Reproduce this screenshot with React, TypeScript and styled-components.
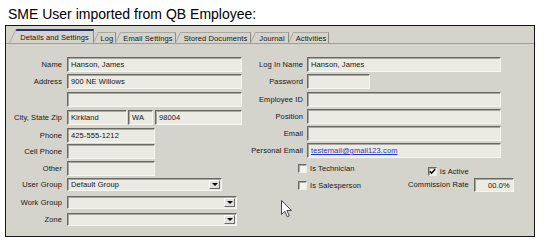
import React from 'react';
import styled, { createGlobalStyle } from 'styled-components';

const Global = createGlobalStyle`
  html, body { margin: 0; padding: 0; background: #fff; }
  body { width: 550px; height: 249px; overflow: hidden; }
`;

const Page = styled.div`
  padding: 6px 0 0 5px;
`;

const Title = styled.div`
  font-family: "Liberation Sans", Arial, sans-serif;
  font-size: 14px;
  line-height: 16px;
  color: #000;
  margin: 0 0 3px 3px;
`;

const Panel = styled.div`
  position: relative;
  width: 530px;
  height: 212px;
  box-sizing: border-box;
  border: 1px solid #151515;
  background: #d5d4cc;
  font-family: "Liberation Sans", Arial, sans-serif;
  font-size: 7.5px;
  letter-spacing: 0.1px;
  color: #151515;
`;

const TabStrip = styled.div`
  display: flex;
  align-items: flex-end;
  height: 18px;
  box-sizing: border-box;
  padding-left: 10px;
  border-bottom: 1px solid #9d9c95;
`;

const Tab = styled.div<{ $w: number; $active?: boolean }>`
  position: relative;
  flex: none;
  width: ${(p) => p.$w}px;
  height: ${(p) => (p.$active ? 14 : 11)}px;
  margin-left: ${(p) => (p.$active ? 0 : 5)}px;
  box-sizing: border-box;
  border-top: ${(p) => (p.$active ? '2px solid #27306a' : '1px solid #a9a8a0')};
  border-right: 1px solid #8d8c85;
  display: flex;
  align-items: center;
  justify-content: center;
  white-space: nowrap;
  &::before {
    content: '';
    position: absolute;
    left: ${(p) => (p.$active ? -7 : -6)}px;
    top: ${(p) => (p.$active ? -2 : -1)}px;
    bottom: 0;
    width: 6px;
    border-left: 1px solid #a9a8a0;
    transform-origin: bottom left;
    transform: skewX(-25deg);
  }
`;

const Body = styled.div`
  display: flex;
  gap: 5px;
  padding-top: 13px;
`;

const Col = styled.div<{ $w: number }>`
  display: flex;
  flex-direction: column;
  width: ${(p) => p.$w}px;
  flex: none;
`;

const Row = styled.div<{ $h: number }>`
  display: flex;
  align-items: flex-start;
  height: ${(p) => p.$h}px;
`;

const Label = styled.div<{ $gap: number; $lh?: number }>`
  flex: none;
  width: 56px;
  margin-right: ${(p) => p.$gap}px;
  text-align: right;
  line-height: ${(p) => p.$lh ?? 15}px;
  white-space: nowrap;
`;

const Field = styled.div<{ $w: number; $h?: number; $ml?: number; $right?: boolean }>`
  flex: none;
  box-sizing: border-box;
  width: ${(p) => p.$w}px;
  height: ${(p) => p.$h ?? 15}px;
  margin-left: ${(p) => p.$ml ?? 0}px;
  background: #ecebe3;
  border-top: 1px solid #686863;
  border-left: 1px solid #686863;
  border-right: 1px solid #f7f7f2;
  border-bottom: 1px solid #f7f7f2;
  box-shadow: inset 1px 1px 0 #a9a8a0;
  padding: 0 3px 0 3px;
  line-height: ${(p) => (p.$h ?? 15) - 1}px;
  text-align: ${(p) => (p.$right ? 'right' : 'left')};
  white-space: nowrap;
  overflow: hidden;
  color: #111;
`;

const Select = styled.div<{ $w: number }>`
  flex: none;
  box-sizing: border-box;
  width: ${(p) => p.$w}px;
  height: 13px;
  background: #ecebe3;
  border-top: 1px solid #686863;
  border-left: 1px solid #686863;
  border-right: 1px solid #f7f7f2;
  border-bottom: 1px solid #f7f7f2;
  box-shadow: inset 1px 1px 0 #a9a8a0;
  padding: 0 1px 0 3px;
  display: flex;
  align-items: center;
  justify-content: space-between;
  white-space: nowrap;
  color: #111;
`;

const DropButton = styled.span`
  flex: none;
  width: 11px;
  height: 9px;
  box-sizing: border-box;
  border: 1px solid;
  border-color: #ffffff #6a6a66 #6a6a66 #ffffff;
  background: #e2e1da;
  display: flex;
  align-items: center;
  justify-content: center;
  &::after {
    content: '';
    border-left: 3px solid transparent;
    border-right: 3px solid transparent;
    border-top: 3px solid #000;
  }
`;

const Link = styled.span`
  color: #2438c8;
  text-decoration: underline;
`;

const CheckArea = styled.div`
  display: flex;
  padding-left: 51px;
`;

const CheckCol = styled.div`
  display: flex;
  flex-direction: column;
  width: 110px;
  flex: none;
`;

const CheckRow = styled.label<{ $h: number; $end?: boolean }>`
  display: flex;
  align-items: center;
  justify-content: ${(p) => (p.$end ? 'flex-end' : 'flex-start')};
  gap: 3px;
  height: ${(p) => p.$h}px;
  white-space: nowrap;
`;

const Box = styled.span`
  flex: none;
  width: 9px;
  height: 9px;
  box-sizing: border-box;
  border: 1px solid;
  border-color: #6a6a65 #ecece6 #ecece6 #6a6a65;
  background: #f4f3ee;
  box-shadow: inset 1px 1px 0 #aaa9a1;
  display: flex;
  align-items: center;
  justify-content: center;
`;

const RateGrid = styled.div`
  display: grid;
  grid-template-columns: 1fr 40px;
  grid-auto-rows: 14px;
  column-gap: 5px;
  width: 104px;
  margin-top: 4px;
`;

const RateLabel = styled.div`
  text-align: right;
  line-height: 14px;
  white-space: nowrap;
`;

const Cursor = styled.svg`
  position: absolute;
  left: 275px;
  top: 174px;
`;

const Check = () => (
  <svg width="7" height="7" viewBox="0 0 7 7">
    <polyline points="0.8,3.3 2.6,5.2 6.2,1.2" fill="none" stroke="#000" strokeWidth="1.5" />
  </svg>
);

const Dropdown = ({ w, value }: { w: number; value?: string }) => (
  <Select $w={w}>
    <span>{value ?? ''}</span>
    <DropButton />
  </Select>
);

export default function App() {
  return (
    <>
      <Global />
      <Page>
        <Title>SME User imported from QB Employee:</Title>
        <Panel>
          <TabStrip>
            <Tab $w={78} $active>Details and Settings</Tab>
            <Tab $w={17}>Log</Tab>
            <Tab $w={55}>Email Settings</Tab>
            <Tab $w={70}>Stored Documents</Tab>
            <Tab $w={33}>Journal</Tab>
            <Tab $w={35}>Activities</Tab>
          </TabStrip>
          <Body>
            <Col $w={236}>
              <Row $h={17}>
                <Label $gap={5}>Name</Label>
                <Field $w={175}>Hanson, James</Field>
              </Row>
              <Row $h={18}>
                <Label $gap={5}>Address</Label>
                <Field $w={175}>900 NE Willows</Field>
              </Row>
              <Row $h={18}>
                <Label $gap={5} />
                <Field $w={175} />
              </Row>
              <Row $h={18}>
                <Label $gap={5}>City, State Zip</Label>
                <Field $w={60}>Kirkland</Field>
                <Field $w={25} $ml={1}>WA</Field>
                <Field $w={87} $ml={2}>98004</Field>
              </Row>
              <Row $h={16}>
                <Label $gap={5}>Phone</Label>
                <Field $w={88}>425-555-1212</Field>
              </Row>
              <Row $h={17}>
                <Label $gap={5}>Cell Phone</Label>
                <Field $w={88} />
              </Row>
              <Row $h={17}>
                <Label $gap={5}>Other</Label>
                <Field $w={88} />
              </Row>
              <Row $h={18}>
                <Label $gap={5} $lh={13}>User Group</Label>
                <Dropdown w={155} value="Default Group" />
              </Row>
              <Row $h={17}>
                <Label $gap={5} $lh={13}>Work Group</Label>
                <Dropdown w={170} />
              </Row>
              <Row $h={15}>
                <Label $gap={5} $lh={13}>Zone</Label>
                <Dropdown w={170} />
              </Row>
            </Col>
            <Col $w={254}>
              <Row $h={17}>
                <Label $gap={4}>Log In Name</Label>
                <Field $w={194}>Hanson, James</Field>
              </Row>
              <Row $h={18}>
                <Label $gap={4}>Password</Label>
                <Field $w={63} />
              </Row>
              <Row $h={17}>
                <Label $gap={4}>Employee ID</Label>
                <Field $w={194} />
              </Row>
              <Row $h={17}>
                <Label $gap={4}>Position</Label>
                <Field $w={194} />
              </Row>
              <Row $h={17}>
                <Label $gap={4}>Email</Label>
                <Field $w={194} />
              </Row>
              <Row $h={17}>
                <Label $gap={4}>Personal Email</Label>
                <Field $w={194}>
                  <Link>testemail@gmail123.com</Link>
                </Field>
              </Row>
              <CheckArea>
                <CheckCol>
                  <CheckRow $h={17}>
                    <Box />
                    Is Technician
                  </CheckRow>
                  <CheckRow $h={17}>
                    <Box />
                    Is Salesperson
                  </CheckRow>
                </CheckCol>
                <RateGrid>
                  <CheckRow $h={14} $end>
                    <Box>
                      <Check />
                    </Box>
                    Is Active
                  </CheckRow>
                  <span />
                  <RateLabel>Commission Rate</RateLabel>
                  <Field $w={40} $h={14} $right>
                    00.0%
                  </Field>
                </RateGrid>
              </CheckArea>
            </Col>
          </Body>
          <Cursor width="12" height="18" viewBox="0 0 12 18">
            <path
              d="M0.5 0.5 L0.5 14.5 L3.8 11.3 L6.3 16.8 L8.3 15.9 L5.9 10.5 L10.5 10.5 Z"
              fill="#fff"
              stroke="#444"
              strokeWidth="1"
              strokeLinejoin="round"
            />
          </Cursor>
        </Panel>
      </Page>
    </>
  );
}
